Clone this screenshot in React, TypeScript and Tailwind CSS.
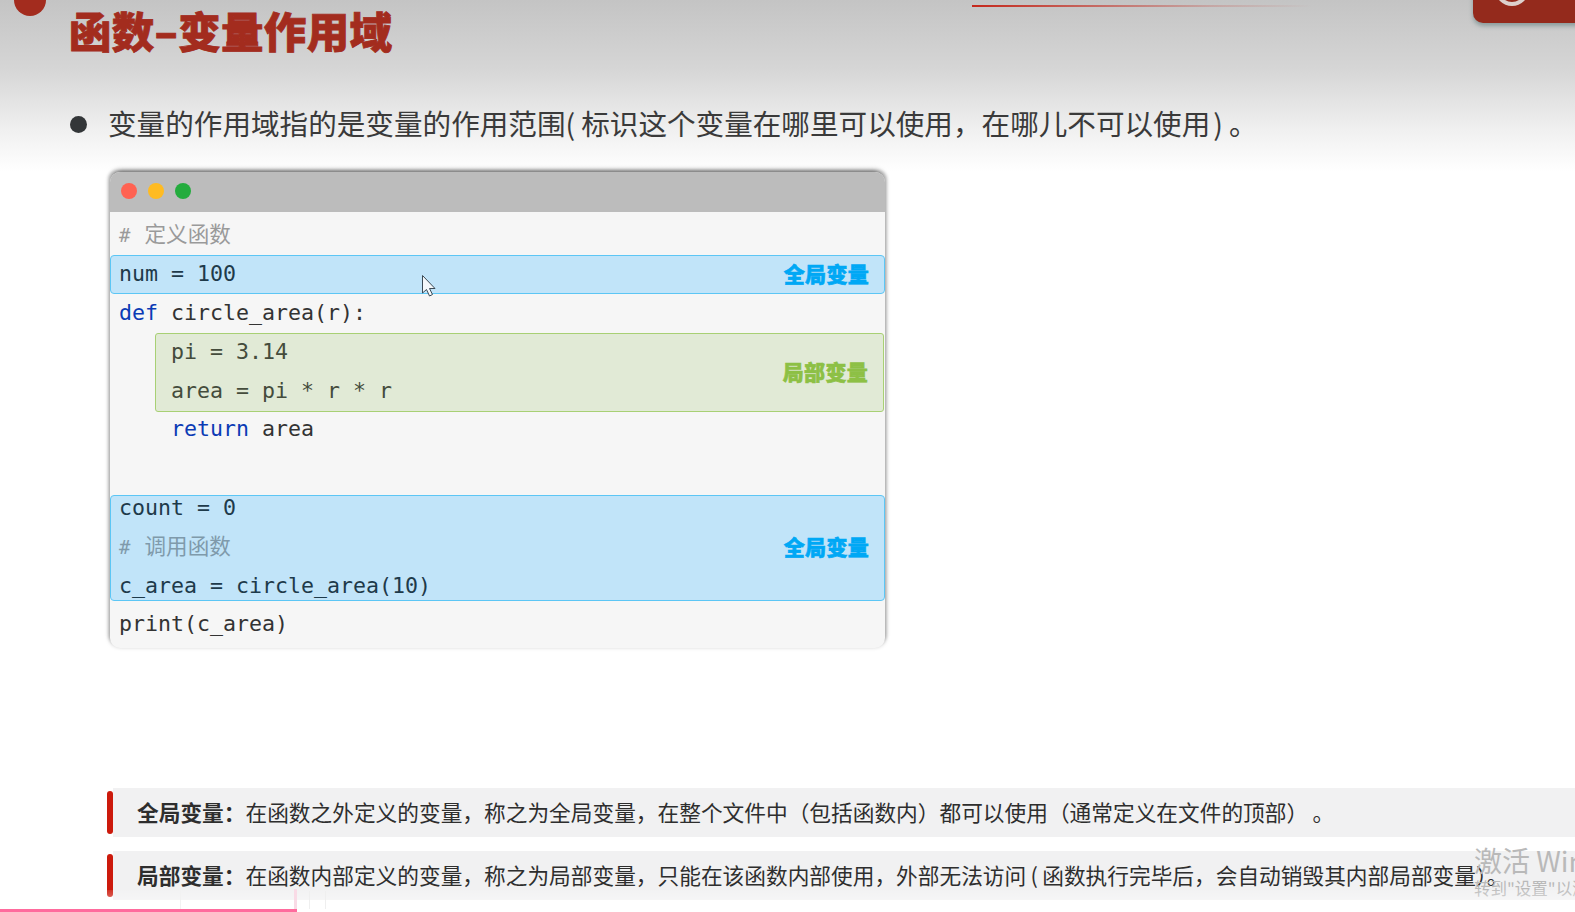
const mono = "font-['DejaVu_Sans_Mono','Noto_Sans_CJK_SC',monospace] text-[21.6px] leading-[37px] whitespace-pre";

function CodeLine({ children, className = "" }: { children?: React.ReactNode; className?: string }) {
  return <div className={`${mono} h-[39px] ${className}`}>{children}</div>;
}

function Comment({ text, className }: { text: string; className: string }) {
  return (
    <div className={`font-['DejaVu_Sans_Mono',monospace] h-[39px] leading-[33px] whitespace-pre ${className}`}>
      <span className="text-[19px]">#</span>
      <span className="font-['Noto_Sans_CJK_SC',sans-serif] text-[21.6px] ml-[14px]">{text}</span>
    </div>
  );
}

function Tag({ text, color }: { text: string; color: string }) {
  return (
    <span
      className={`-mt-[3px] font-['Noto_Sans_CJK_SC',sans-serif] font-black text-[21px] leading-none tracking-[0.3px] [-webkit-text-stroke:0.6px_currentColor] ${color}`}
    >
      {text}
    </span>
  );
}

function Note({ label, text }: { label: string; text: string }) {
  return (
    <div className="flex items-stretch h-[49px] pl-[107px]">
      <div className="w-[6px] my-[3px] rounded-full bg-[#cc1a0c] shrink-0" />
      <div className="flex-1 flex items-center bg-[#f1f1f2] pl-[24px] font-['Noto_Sans_CJK_SC',sans-serif] text-[21.7px] text-[#2e2e2e] whitespace-nowrap overflow-hidden">
        <span className="font-bold">{label}</span>
        <span>{text}</span>
      </div>
    </div>
  );
}

const globalNote =
  "在函数之外定义的变量\uFF0C称之为全局变量\uFF0C在整个文件中\uFF08包括函数内\uFF09都可以使用\uFF08通常定义在文件的顶部\uFF09\u2009\u3002";
const localNote =
  "在函数内部定义的变量\uFF0C称之为局部变量\uFF0C只能在该函数内部使用\uFF0C外部无法访问\u2009(\u2009函数执行完毕后\uFF0C会自动销毁其内部局部变量\uFF09\u3002";

export default function App() {
  return (
    <div className="relative w-[1575px] h-[912px] overflow-hidden flex flex-col bg-[linear-gradient(180deg,#c4c4c4_0px,#d6d6d6_70px,#f0f0f0_130px,#ffffff_172px)] font-['Noto_Sans_CJK_SC',sans-serif]">
      {/* top decorations */}
      <div className="absolute left-[14px] -top-[16px] w-[32px] h-[32px] rounded-full bg-[#a32c1e]" />
      <div className="absolute left-[972px] top-[5px] w-[340px] h-[1.5px] bg-[linear-gradient(90deg,#c5281c,#c5281c33_70%,transparent)]" />
      <div className="absolute left-[1473px] -top-[10px] w-[110px] h-[33px] rounded-bl-[10px] bg-[#942a1c] shadow-[0_3px_4px_rgba(90,120,120,0.55)]">
        <div className="absolute left-[22px] -top-[18px] w-[34px] h-[34px] rounded-full border-[4px] border-[#ddd0cc]" />
      </div>

      <h1 className="pl-[69px] h-[64px] pt-[5px] text-[42.5px] leading-[50px] font-black tracking-[0.3px] text-[#a32c1e] [-webkit-text-stroke:0.8px_#a32c1e] whitespace-nowrap">
        函数{"\u2013"}变量作用域
      </h1>

      <div className="flex items-center h-[44px] mt-[38px] pl-[70px] text-[#3a3a3a] whitespace-nowrap">
        <div className="w-[17px] h-[17px] rounded-full bg-[#333638] shrink-0" />
        <span className="ml-[21px] -mt-[2px] text-[28.6px] leading-none">
          变量的作用域指的是变量的作用范围<span className="pr-[6px]">(</span>标识这个变量在哪里可以使用{"\uFF0C"}在哪儿不可以使用<span className="pl-[3px] pr-[6px]">)</span>{"\u3002"}
        </span>
      </div>

      {/* code window */}
      <div className="ml-[110px] mt-[26px] w-[775px] h-[476px] rounded-[10px] overflow-hidden bg-[#f6f6f6] shadow-[0_-2px_5px_rgba(0,0,0,0.4),3px_-3px_3px_-1px_rgba(0,0,0,0.14),-3px_-3px_3px_-1px_rgba(0,0,0,0.14)] shrink-0 text-[#333]">
        <div className="flex items-center gap-[11px] h-[40px] pl-[11px] pb-[2px] bg-[#bcbcbc]">
          <div className="w-[16px] h-[16px] rounded-full bg-[#ff6252]" />
          <div className="w-[16px] h-[16px] rounded-full bg-[#ffbb22]" />
          <div className="w-[16px] h-[16px] rounded-full bg-[#24ac3e]" />
        </div>
        <div className="h-[4px]" />
        <Comment text="定义函数" className="pl-[9px] text-[#9a9a9a]" />
        <div className="flex items-center justify-between h-[39px] pl-[9px] pr-[15px] rounded-[4px] border border-[#5cc6f5] bg-[#c1e4f9] text-[#1e3a4a]">
          <CodeLine className="-ml-px">num = 100</CodeLine>
          <Tag text="全局变量" color="text-[#00a8f5]" />
        </div>
        <CodeLine className="pl-[9px]">
          <span className="text-[#0b3bb5]">def</span> circle_area(r):
        </CodeLine>
        <div className="flex items-center justify-between h-[79px] ml-[45px] mr-px pl-[15px] pr-[15px] rounded-[3px] border border-[#a8d074] bg-[#e1ead6] text-[#444c3c]">
          <div className="-mt-[2px]">
            <CodeLine>pi = 3.14</CodeLine>
            <CodeLine>area = pi * r * r</CodeLine>
          </div>
          <Tag text="局部变量" color="text-[#8dc045]" />
        </div>
        <CodeLine className="pl-[9px] -mt-[2px]">
          {"    "}
          <span className="text-[#0b3bb5]">return</span> area
        </CodeLine>
        <div className="h-[46px]" />
        <div className="flex items-center justify-between h-[106px] pl-[9px] pr-[15px] rounded-[4px] border border-[#5cc6f5] bg-[#c1e4f9] text-[#1e3a4a]">
          <div className="-ml-px self-start -mt-[7px]">
            <CodeLine>count = 0</CodeLine>
            <Comment text="调用函数" className="text-[#7f9aab]" />
            <CodeLine>c_area = circle_area(10)</CodeLine>
          </div>
          <Tag text="全局变量" color="text-[#00a8f5]" />
        </div>
        <CodeLine className="pl-[9px] mt-[4px]">print(c_area)</CodeLine>
      </div>

      <div className="mt-[140px] flex flex-col gap-[14px]">
        <Note label={"全局变量\uFF1A"} text={globalNote} />
        <Note label={"局部变量\uFF1A"} text={localNote} />
      </div>

      {/* mouse cursor */}
      <svg className="absolute left-[421px] top-[274px]" width="18" height="24" viewBox="0 0 18 24">
        <path d="M1.5 1.5 V19 L5.5 15.5 L8.5 22 L11.5 20.5 L8.5 14.5 H14 Z" fill="#f4f8fb" stroke="#3c4a55" strokeWidth="1" />
      </svg>

      {/* windows watermark */}
      <div className="absolute left-[1474px] top-[842px] text-[#b9b9b9] whitespace-nowrap">
        <div className="text-[28px] leading-[36px]">激活 Windows</div>
        <div className="text-[16.5px] leading-[20px]">转到"设置"以激活 Windows。</div>
      </div>

      {/* player strip along the bottom */}
      <div className="absolute left-0 right-0 bottom-0 h-[22px] bg-[linear-gradient(180deg,rgba(255,255,255,0.1),rgba(255,255,255,0.65))]" />
      <div className="absolute left-[180px] bottom-[3px] w-px h-[18px] bg-[#f2f2f2]" />
      <div className="absolute left-[294px] bottom-[3px] w-[3px] h-[20px] bg-[#f9dbe6]" />
      <div className="absolute left-[309px] bottom-[3px] w-px h-[18px] bg-[#efefef]" />
      <div className="absolute left-[325px] bottom-[3px] w-px h-[18px] bg-[#efefef]" />
      <div className="absolute left-0 bottom-0 w-[297px] h-[3px] bg-[#ff6b9d]" />
    </div>
  );
}
